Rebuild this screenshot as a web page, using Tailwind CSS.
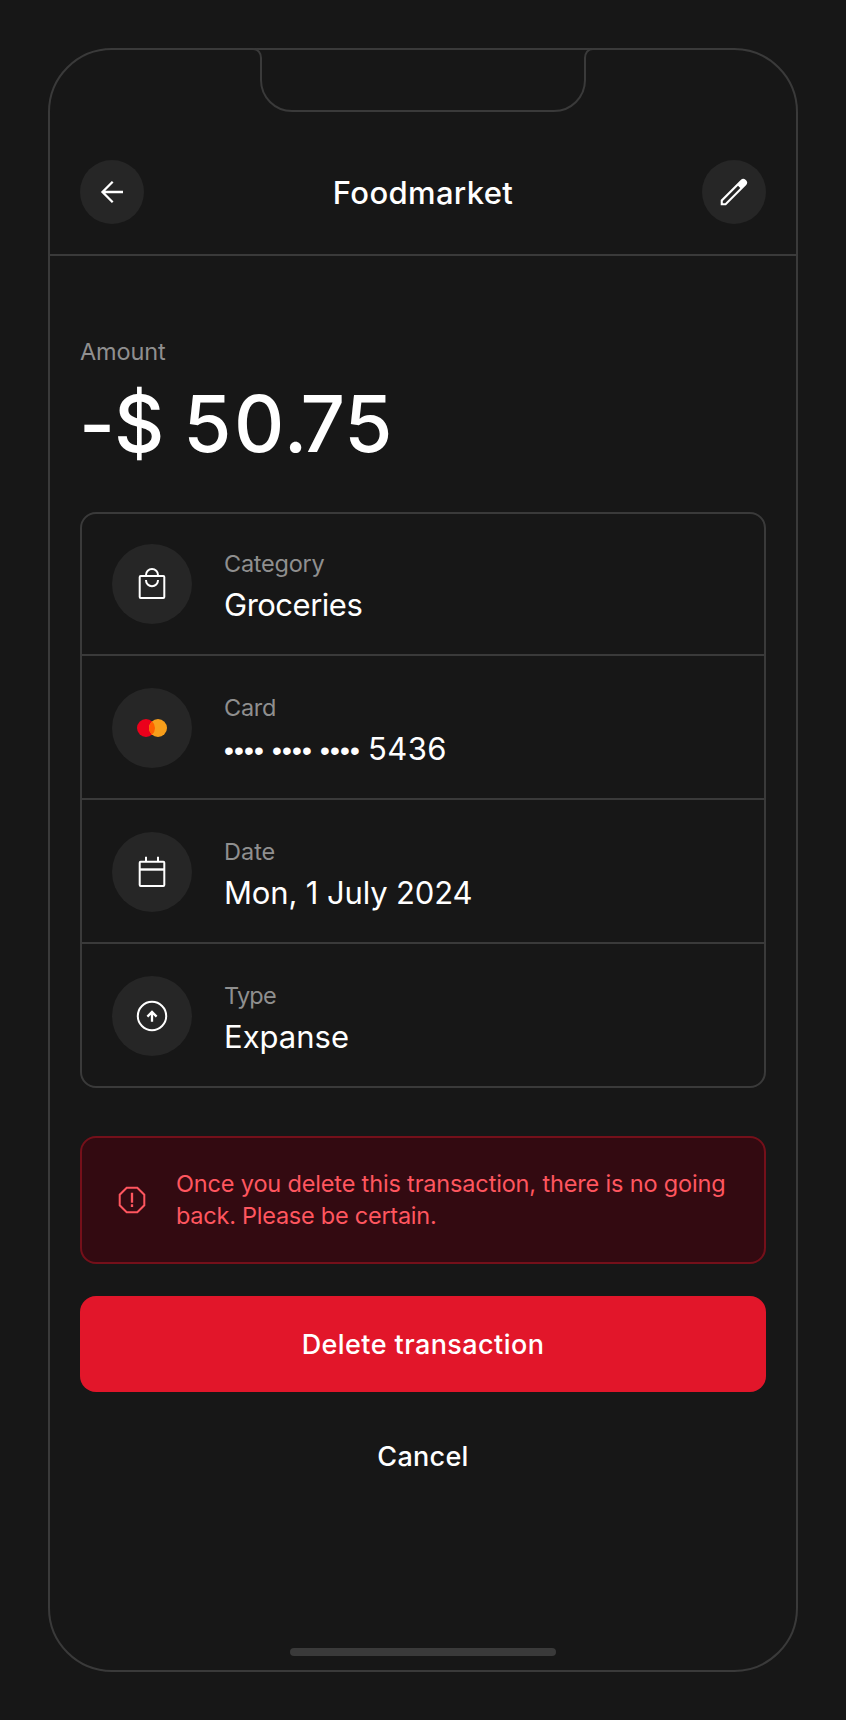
<!DOCTYPE html>
<html lang="en">
<head>
<meta charset="utf-8">
<title>Foodmarket</title>
<script src="https://cdn.jsdelivr.net/npm/@tailwindcss/browser@4"></script>
</head>
<body class="bg-[#171717] p-12 text-white font-[Inter,sans-serif]">
<main class="relative flex h-[1624px] w-[750px] flex-col rounded-[64px] border-2 border-[#3a3a3a]">
  <svg class="absolute left-[200px] top-[-2px]" width="346" height="68" viewBox="0 0 346 68" fill="none" stroke="#3a3a3a" stroke-width="2"><path d="M3 1C8 1 11 5 11 10V32A31 31 0 0 0 42 63H304A31 31 0 0 0 335 32V10C335 5 338 1 343 1"/></svg>

  <header class="flex h-[206px] items-end justify-between border-b-2 border-[#3a3a3a] px-[30px] pb-[30px]">
    <button class="flex size-16 items-center justify-center rounded-full bg-[#262626]">
      <svg width="32" height="32" viewBox="0 0 32 32" fill="none" stroke="#fff" stroke-width="2.3"><path d="M27 16H6.500M16.700 5.800L6.500 16L16.700 26.200"/></svg>
    </button>
    <h1 class="flex h-16 items-center pt-0.5 text-[31px] font-medium tracking-[0.35px]">Foodmarket</h1>
    <button class="flex size-16 items-center justify-center rounded-full bg-[#262626]">
      <svg width="32" height="32" viewBox="0 0 32 32" fill="#fff"><path fill-rule="evenodd" d="M2.700 29.300V24L22.700 4Q25.200 1.700 27.500 3.800L28.300 4.600Q30.300 6.900 28 9.300L8 29.300ZM4.800 27.200H7.100L22.300 12L20 9.700L4.800 24.900Z"/></svg>
    </button>
  </header>

  <section class="flex flex-col px-[30px] pt-20">
    <p class="h-8 text-[23.500px] leading-8 tracking-[-0.15px] text-[#8f8f8f]">Amount</p>
    <p class="-ml-px mt-2 h-24 text-[78px] font-medium leading-[96px] whitespace-pre"><span class="tracking-[-1px]">-$ </span><span class="tracking-[2.500px]">5</span><span class="tracking-[-0.5px]">0</span><span class="tracking-[-7px]">.</span><span>75</span></p>

    <ul class="mt-10 flex flex-col rounded-2xl border-2 border-[#3a3a3a]">
      <li class="flex gap-8 px-[30px] py-[30px]">
        <span class="flex size-20 items-center justify-center rounded-full bg-[#262626]"><svg width="32" height="32" viewBox="0 0 32 32" fill="none" stroke="#fff" stroke-width="2"><rect x="3.700" y="8" width="24.600" height="22" rx="1"/><path d="M10 8V7A6 6 0 0 1 22 7V8M10 12V12.300A6 6 0 0 0 22 12.300V12"/></svg></span>
        <div class="flex flex-col gap-[5px] pt-1"><span class="h-8 text-[23.500px] leading-8 tracking-[-0.25px] text-[#8f8f8f]">Category</span><span class="h-[39px] text-[31px] leading-10 tracking-[-0.5px]">Groceries</span></div>
      </li>
      <li class="flex gap-8 border-t-2 border-[#3a3a3a] px-[30px] pb-[30px] pt-8">
        <span class="flex size-20 items-center justify-center rounded-full bg-[#262626]"><svg width="32" height="32" viewBox="0 0 32 32"><circle cx="10" cy="16" r="9" fill="#eb001b"/><circle cx="22" cy="16" r="9" fill="#f79e1b"/><path d="M16 9.300A9 9 0 0 1 16 22.700A9 9 0 0 1 16 9.300" fill="#ff5f00"/></svg></span>
        <div class="flex flex-col gap-[5px] pt-1"><span class="h-8 text-[23.500px] leading-8 tracking-[-0.25px] text-[#8f8f8f]">Card</span>
          <span class="flex h-[39px] items-baseline gap-2 text-[31px] leading-10">
            <span class="w-10 font-['Liberation_Sans'] text-[28px] tracking-[0.2px]">••••</span><span class="w-10 font-['Liberation_Sans'] text-[28px] tracking-[0.2px]">••••</span><span class="w-10 font-['Liberation_Sans'] text-[28px] tracking-[0.2px]">••••</span><span class="tracking-[0.4px]">5436</span>
          </span>
        </div>
      </li>
      <li class="flex gap-8 border-t-2 border-[#3a3a3a] px-[30px] pb-[30px] pt-8">
        <span class="flex size-20 items-center justify-center rounded-full bg-[#262626]"><svg width="32" height="32" viewBox="0 0 32 32" fill="none" stroke="#fff" stroke-width="2"><rect x="3.700" y="5.700" width="24.600" height="24.300" rx="1"/><path d="M10 0.700V6M22 0.700V6"/><path d="M4 13.500H28" stroke-width="2.400"/></svg></span>
        <div class="flex flex-col gap-[5px] pt-1"><span class="h-8 text-[23.500px] leading-8 text-[#8f8f8f]">Date</span><span class="h-[39px] text-[31px] leading-10 tracking-[-0.14px]">Mon, 1 July 2024</span></div>
      </li>
      <li class="flex gap-8 border-t-2 border-[#3a3a3a] px-[30px] pb-[30px] pt-8">
        <span class="flex size-20 items-center justify-center rounded-full bg-[#262626]"><svg width="32" height="32" viewBox="0 0 32 32" fill="none" stroke="#fff" stroke-width="2"><circle cx="16" cy="16" r="14.200"/><path d="M16 21.700V12M11.400 16.600L16 12L20.600 16.600" stroke-width="2.300"/></svg></span>
        <div class="flex flex-col gap-[5px] pt-1"><span class="h-8 text-[23.500px] leading-8 tracking-[-0.8px] text-[#8f8f8f]">Type</span><span class="h-[39px] text-[31px] leading-10">Expanse</span></div>
      </li>
    </ul>

    <div class="mt-12 flex h-32 items-center gap-7 rounded-2xl border-2 border-[#75101a] bg-[#330a11] pl-[34px]">
      <svg class="shrink-0" width="32" height="32" viewBox="0 0 32 32" fill="none" stroke="#ff565f" stroke-width="2"><path d="M10.700 3.700H21.300L28.300 10.700V21.300L21.300 28.300H10.700L3.700 21.300V10.700Z"/><path d="M16 8.700V18.700M16 20.300V23" stroke-width="2.300"/></svg>
      <p class="text-[23.500px] leading-8 tracking-[-0.16px] whitespace-nowrap text-[#ff565f]">Once you delete this transaction, there is no going<br><span class="tracking-[-0.25px]">back. Please be certain.</span></p>
    </div>
    <button class="mt-8 h-24 rounded-2xl bg-[#e2162a] pt-0.5 text-[27px] font-medium tracking-[0.42px]">Delete transaction</button>
    <button class="mt-4 h-24 rounded-2xl pt-0.5 text-[27px] font-medium tracking-[0.3px]">Cancel</button>
  </section>
  <div class="mx-auto mb-[14px] mt-auto h-2 w-[266px] rounded-full bg-[#3a3a3a]"></div>
</main>
</body>
</html>
